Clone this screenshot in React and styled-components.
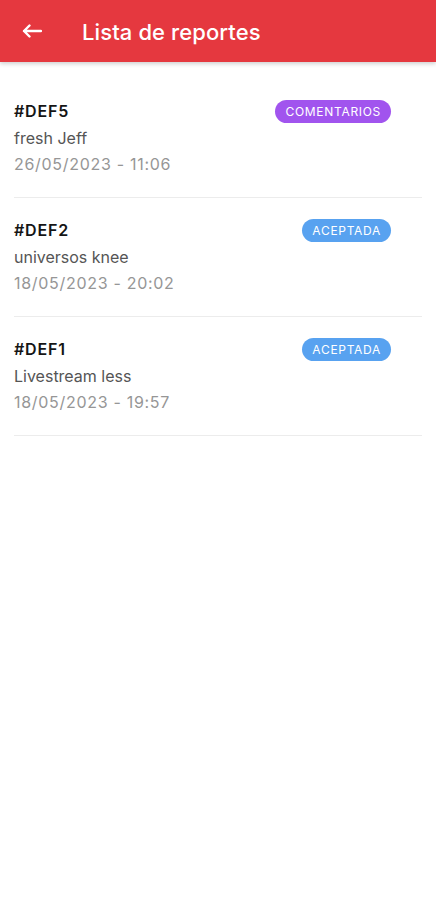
import styled, { createGlobalStyle } from 'styled-components';

const GlobalStyle = createGlobalStyle`
  body {
    margin: 0;
    background: #ffffff;
    font-family: Inter, "Liberation Sans", sans-serif;
  }
`;

const reportes = [
  { id: '#DEF5', texto: 'fresh Jeff', fecha: '26/05/2023 - 11:06', estado: 'COMENTARIOS', color: '#A154EE' },
  { id: '#DEF2', texto: 'universos knee', fecha: '18/05/2023 - 20:02', estado: 'ACEPTADA', color: '#58A2F0' },
  { id: '#DEF1', texto: 'Livestream less', fecha: '18/05/2023 - 19:57', estado: 'ACEPTADA', color: '#58A2F0' },
];

export default function App() {
  return (
    <Screen>
      <GlobalStyle />
      <Header>
        <BackButton>
          <svg width="20" height="14" viewBox="0 0 20 14" fill="none">
            <path d="M19 7H2M7.5 1.5L2 7l5.5 5.5" stroke="#fff" strokeWidth="2.4" strokeLinecap="round" strokeLinejoin="round" />
          </svg>
        </BackButton>
        <Title>Lista de reportes</Title>
      </Header>
      <List>
        {reportes.map((r) => (
          <Item key={r.id}>
            <Info>
              <Codigo>{r.id}</Codigo>
              <Texto>{r.texto}</Texto>
              <Fecha>{r.fecha}</Fecha>
            </Info>
            <Badge $color={r.color}>{r.estado}</Badge>
          </Item>
        ))}
      </List>
    </Screen>
  );
}

const Screen = styled.div`
  width: 436px;
  min-height: 900px;
  background: #fff;
`;

const Header = styled.header`
  height: 62px;
  background: #E5383F;
  display: flex;
  align-items: center;
  box-shadow: 0 2px 4px rgba(0, 0, 0, 0.18);
`;

const BackButton = styled.div`
  width: 20px;
  margin-left: 22px;
  margin-right: 40px;
  display: flex;
  align-items: center;
`;

const Title = styled.h1`
  margin: 0 0 -2px;
  color: #fff;
  font-size: 22px;
  font-weight: 500;
  letter-spacing: 0.1px;
`;

const List = styled.div`
  padding: 17px 14px 0;
`;

const Item = styled.div`
  display: flex;
  justify-content: space-between;
  align-items: flex-start;
  padding: 19px 31px 19px 0;
  border-bottom: 1px solid #ececec;
`;

const Info = styled.div`
  display: flex;
  flex-direction: column;
`;

const Codigo = styled.span`
  font-size: 16px;
  font-weight: 600;
  color: #151515;
  line-height: 27px;
  letter-spacing: 0.8px;
`;

const Texto = styled.span`
  font-size: 16px;
  color: #555;
  line-height: 26px;
`;

const Fecha = styled.span`
  font-size: 16px;
  color: #969696;
  line-height: 27px;
  letter-spacing: 0.7px;
`;

const Badge = styled.span`
  background: ${(p) => p.$color};
  color: #fff;
  font-size: 12px;
  line-height: 23px;
  height: 23px;
  padding: 0 10px;
  border-radius: 12px;
  margin-top: 2px;
  letter-spacing: 0.7px;
`;
